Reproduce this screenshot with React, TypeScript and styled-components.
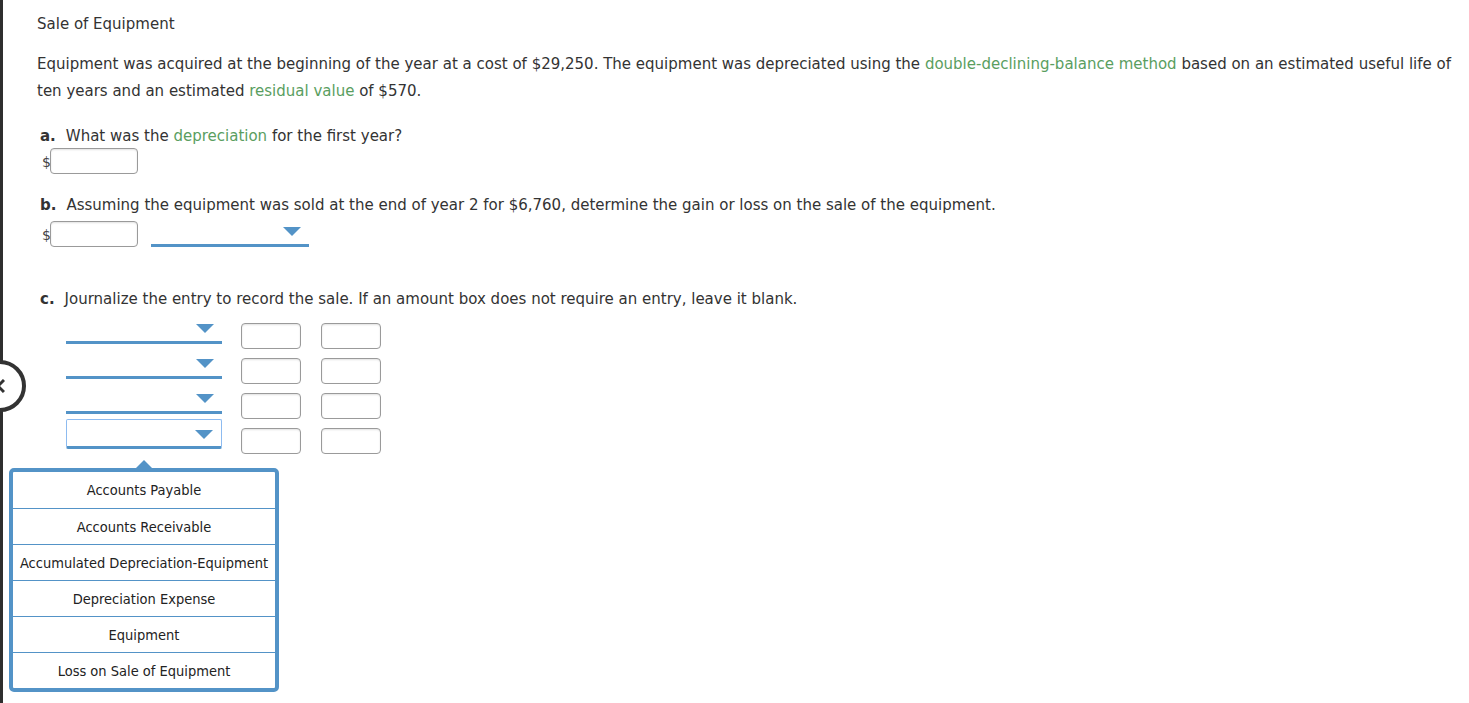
import React from "react";
import styled, { createGlobalStyle } from "styled-components";

const Global = createGlobalStyle`
  html, body { margin: 0; padding: 0; background: #fff; }
  body { font-family: "DejaVu Sans", Verdana, sans-serif; color: #333; }
  * { box-sizing: border-box; }
`;

const BLUE = "#5393c7";

const Page = styled.div`
  display: flex;
  min-height: 703px;
  position: relative;
  overflow: hidden;
`;

const Rail = styled.div`
  width: 3px;
  background: #2e2e2e;
  flex: none;
  position: relative;
`;

const NavCircle = styled.div`
  position: absolute;
  left: -26px;
  top: 360px;
  width: 52px;
  height: 52px;
  border-radius: 50%;
  border: 4px solid #333;
  background: #fff;
  z-index: 2;
  svg { position: absolute; left: 19px; top: 15px; }
`;

const Content = styled.div`
  padding: 11px 0 0 34px;
  flex: 1;
  font-size: 15px;
`;

const Title = styled.div`
  line-height: 27px;
`;

const Para = styled.p`
  margin: 13px 0 0;
  line-height: 27px;
`;

const Term = styled.span`
  color: #5a9e5f;
`;

const Question = styled.div<{ $top: number }>`
  margin-top: ${(p) => p.$top}px;
  line-height: 24px;
  padding-left: 3px;
  b { font-weight: bold; margin-right: 10px; }
`;

const AnswerRow = styled.div`
  display: flex;
  align-items: flex-end;
  padding-left: 5px;
`;

const Dollar = styled.span`
  font-size: 14px;
  color: #444;
  line-height: 20px;
  margin-bottom: 2px;
  margin-right: -1px;
`;

const AmountBox = styled.div<{ $w: number }>`
  width: ${(p) => p.$w}px;
  height: 26px;
  border: 1px solid #9a9a9a;
  border-radius: 4px;
  box-shadow: inset 0 1px 2px rgba(0,0,0,0.12);
  background: #fff;
  flex: none;
`;

const Select = styled.div<{ $w: number; $focus?: boolean; $ml?: number }>`
  position: relative;
  width: ${(p) => p.$w}px;
  height: 30px;
  margin-left: ${(p) => p.$ml ?? 0}px;
  flex: none;
  border-bottom: 3px solid ${BLUE};
  ${(p) =>
    p.$focus
      ? `border-top: 1px solid #8dbbf0; border-left: 1px solid #8dbbf0; border-right: 1px solid #8dbbf0; border-radius: 2px;`
      : ""}
`;

const Arrow = styled.span`
  position: absolute;
  right: 8px;
  top: 10px;
  width: 0;
  height: 0;
  border-left: 9px solid transparent;
  border-right: 9px solid transparent;
  border-top: 9px solid ${BLUE};
`;

const Journal = styled.div`
  margin-top: 3px;
  padding-left: 29px;
  display: flex;
  flex-direction: column;
`;

const JRow = styled.div`
  display: flex;
  align-items: flex-end;
  gap: 19px;
  height: 35px;
  & > ${Select} { margin-bottom: 5px; }
`;

const Amounts = styled.div`
  display: flex;
  gap: 20px;
`;

const Popup = styled.div`
  position: absolute;
  left: 50%;
  top: 48px;
  transform: translateX(-50%);
  width: 270px;
  border: 4px solid ${BLUE};
  border-radius: 5px;
  background: #fff;
  z-index: 5;
  font-family: Tahoma, "DejaVu Sans Condensed", "Liberation Sans", sans-serif;
  &::before {
    content: "";
    position: absolute;
    left: 50%;
    top: -12px;
    transform: translateX(-50%);
    border-left: 8px solid transparent;
    border-right: 8px solid transparent;
    border-bottom: 8px solid ${BLUE};
  }
`;

const Option = styled.div`
  height: 36px;
  display: flex;
  align-items: center;
  justify-content: center;
  font-size: 14.5px;
  color: #222;
  white-space: nowrap;
  & + & { border-top: 1px solid ${BLUE}; }
`;

const options = [
  "Accounts Payable",
  "Accounts Receivable",
  "Accumulated Depreciation-Equipment",
  "Depreciation Expense",
  "Equipment",
  "Loss on Sale of Equipment",
];

export default function App() {
  return (
    <>
      <Global />
      <Page>
        <Rail>
          <NavCircle>
            <svg width="8" height="14" viewBox="0 0 8 14">
              <path d="M7 1 L1 7 L7 13" stroke="#333" strokeWidth="3" fill="none" />
            </svg>
          </NavCircle>
        </Rail>
        <Content>
          <Title>Sale of Equipment</Title>
          <Para>
            Equipment was acquired at the beginning of the year at a cost of $29,250. The equipment was depreciated using the{" "}
            <Term>double-declining-balance method</Term> based on an estimated useful life of
            <br />
            ten years and an estimated <Term>residual value</Term> of $570.
          </Para>

          <Question $top={19}>
            <b>a.</b>What was the <Term>depreciation</Term> for the first year?
          </Question>
          <AnswerRow>
            <Dollar>$</Dollar>
            <AmountBox $w={88} />
          </AnswerRow>

          <Question $top={19}>
            <b>b.</b>Assuming the equipment was sold at the end of year 2 for $6,760, determine the gain or loss on the sale of the equipment.
          </Question>
          <AnswerRow>
            <Dollar>$</Dollar>
            <AmountBox $w={88} />
            <Select $w={158} $ml={13}>
              <Arrow />
            </Select>
          </AnswerRow>

          <Question $top={40}>
            <b>c.</b>Journalize the entry to record the sale. If an amount box does not require an entry, leave it blank.
          </Question>
          <Journal>
            {[0, 1, 2, 3].map((i) => (
              <JRow key={i}>
                <Select $w={156} $focus={i === 3}>
                  <Arrow />
                  {i === 3 && (
                    <Popup>
                      {options.map((o) => (
                        <Option key={o}>{o}</Option>
                      ))}
                    </Popup>
                  )}
                </Select>
                <Amounts>
                  <AmountBox $w={60} />
                  <AmountBox $w={60} />
                </Amounts>
              </JRow>
            ))}
          </Journal>
        </Content>
      </Page>
    </>
  );
}
